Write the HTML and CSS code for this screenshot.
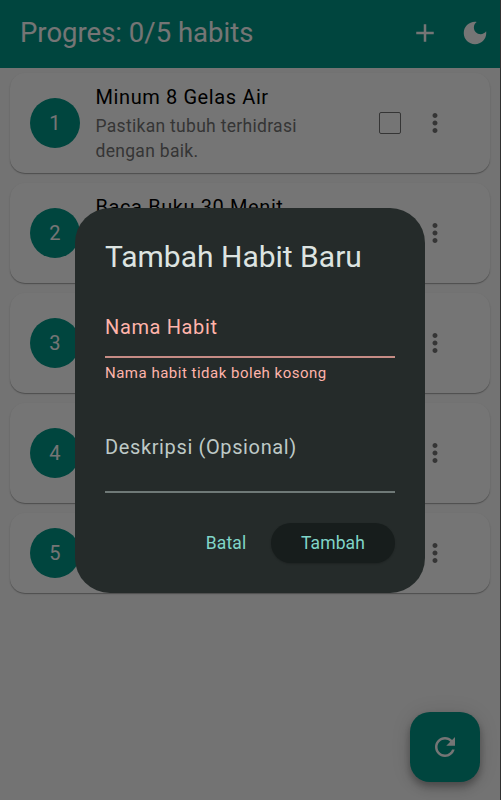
FILE: index.html
```html
<!DOCTYPE html>
<html lang="id">
<head>
<meta charset="utf-8">
<title>Habits</title>
<link rel="stylesheet" href="styles.css">
</head>
<body>
<svg class="defs" width="0" height="0">
  <symbol id="more" viewBox="0 0 24 24"><path d="M12 8c1.1 0 2-.9 2-2s-.9-2-2-2-2 .9-2 2 .9 2 2 2zm0 2c-1.1 0-2 .9-2 2s.9 2 2 2 2-.9 2-2-.9-2-2-2zm0 6c-1.1 0-2 .9-2 2s.9 2 2 2 2-.9 2-2-.9-2-2-2z"/></symbol>
</svg>
<div class="app">
  <header class="bar">
    <h1>Progres: 0/5 habits</h1>
    <svg class="icon" viewBox="0 0 24 24"><path d="M19 13h-6v6h-2v-6H5v-2h6V5h2v6h6v2z"/></svg>
    <svg class="icon" viewBox="0 0 24 24"><path d="M12 3c-4.97 0-9 4.03-9 9s4.03 9 9 9 9-4.03 9-9c0-.46-.04-.92-.1-1.36-.98 1.37-2.58 2.26-4.4 2.26-2.98 0-5.4-2.42-5.4-5.4 0-1.81.89-3.42 2.26-4.4-.44-.06-.9-.1-1.36-.1z"/></svg>
  </header>
  <main class="list">
    <article class="card">
      <span class="num">1</span>
      <div class="text"><h2>Minum 8 Gelas Air</h2><p>Pastikan tubuh terhidrasi dengan baik.</p></div>
      <span class="check"></span>
      <svg class="icon more"><use href="#more"/></svg>
    </article>
    <article class="card">
      <span class="num">2</span>
      <div class="text"><h2>Baca Buku 30 Menit</h2></div>
      <span class="check"></span>
      <svg class="icon more"><use href="#more"/></svg>
    </article>
    <article class="card">
      <span class="num">3</span>
      <div class="text"></div>
      <span class="check"></span>
      <svg class="icon more"><use href="#more"/></svg>
    </article>
    <article class="card">
      <span class="num">4</span>
      <div class="text"></div>
      <span class="check"></span>
      <svg class="icon more"><use href="#more"/></svg>
    </article>
    <article class="card short">
      <span class="num">5</span>
      <div class="text"></div>
      <span class="check"></span>
      <svg class="icon more"><use href="#more"/></svg>
    </article>
  </main>
  <div class="fab"><svg class="icon" viewBox="0 0 24 24"><path d="M17.65 6.35C16.2 4.9 14.21 4 12 4c-4.42 0-7.99 3.58-7.99 8s3.57 8 7.99 8c3.73 0 6.84-2.55 7.73-6h-2.08c-.82 2.33-3.04 4-5.65 4-3.31 0-6-2.69-6-6s2.69-6 6-6c1.66 0 3.14.69 4.22 1.78L13 11h7V4l-2.35 2.35z"/></svg></div>
</div>
<div class="scrim">
  <section class="dialog">
    <h2>Tambah Habit Baru</h2>
    <div class="field error"><label>Nama Habit</label></div>
    <p class="message">Nama habit tidak boleh kosong</p>
    <div class="field tall"><label>Deskripsi (Opsional)</label></div>
    <div class="actions">
      <button class="flat">Batal</button>
      <button class="raised">Tambah</button>
    </div>
  </section>
</div>
</body>
</html>
```
FILE: styles.css
```css
* { box-sizing: border-box; margin: 0; padding: 0; }
body {
  width: 501px;
  height: 800px;
  overflow: hidden;
  background: #303030;
  font-family: Roboto, sans-serif;
}
.defs { position: absolute; }
h1, h2 { font-weight: 400; }
.app {
  width: 500px;
  height: 800px;
  background: #fafafa;
}
.icon { width: 30px; height: 30px; fill: currentColor; flex: none; }
.bar {
  height: 68px;
  padding: 0 10px 3px 20px;
  display: flex;
  align-items: center;
  gap: 20px;
  background: #009688;
  color: #fff;
}
.bar h1 { flex: 1; font-size: 27.5px; line-height: 35px; }
.list {
  display: flex;
  flex-direction: column;
  gap: 10px;
  padding: 5px 10px;
}
.card {
  height: 100px;
  padding: 0 40px 0 20px;
  display: flex;
  align-items: center;
  background: #fff;
  border-radius: 15px;
  box-shadow: 0 1px 1px rgba(0, 0, 0, .26), 0 1px 2px rgba(0, 0, 0, .1);
}
.card.short { height: 80px; }
.num {
  flex: none;
  width: 50px;
  height: 50px;
  border-radius: 50%;
  background: #009688;
  color: #fff;
  font-size: 20px;
  line-height: 50px;
  letter-spacing: .2px;
  text-align: center;
}
.text { flex: 1; margin-left: 15.5px; align-self: flex-start; padding-top: 10px; }
.text h2 { font-size: 20px; line-height: 29px; letter-spacing: .6px; color: #000; }
.text p {
  width: 230px;
  padding-top: 2px;
  font-size: 17.5px;
  line-height: 25px;
  letter-spacing: .3px;
  color: #757575;
}
.check {
  width: 22px;
  height: 22px;
  margin-right: 19px;
  border: 1.25px solid #757575;
  border-radius: 2px;
}
.more { color: #757575; }
.fab {
  position: absolute;
  left: 410px;
  top: 712px;
  width: 70px;
  height: 70px;
  display: grid;
  place-items: center;
  border-radius: 20px;
  background: #009688;
  color: #fff;
  box-shadow: 0 4px 6px rgba(0, 0, 0, .2), 0 7px 12px rgba(0, 0, 0, .14), 0 1px 20px rgba(0, 0, 0, .12);
}
.scrim {
  position: absolute;
  left: 0;
  top: 0;
  width: 500px;
  height: 800px;
  background: rgba(0, 0, 0, .54);
  display: grid;
  place-items: center;
}
.dialog {
  width: 350px;
  height: 385px;
  padding: 30px;
  border-radius: 35px;
  background: #252b2a;
  color: #dde4e1;
}
.dialog h2 { font-size: 30px; line-height: 38px; padding-bottom: 2px; }
.field {
  height: 60px;
  margin-top: 20px;
  border-bottom: 2px solid #6f7977;
  color: #bec9c6;
  font-size: 20px;
  line-height: 30px;
  letter-spacing: .625px;
  padding-top: 14px;
}
.field.error { color: #ffb4ab; border-color: #c68c85; }
.message { color: #ffb4ab; font-size: 15px; line-height: 20px; letter-spacing: .5px; padding-top: 5px; }
.field.tall { height: 75px; margin-top: 35px; }
.actions { display: flex; justify-content: flex-end; gap: 10px; margin-top: 30px; }
button {
  height: 40px;
  border: 0;
  border-radius: 20px;
  background: none;
  color: #80d5c8;
  font: 400 17.5px/25px Roboto, sans-serif;
  letter-spacing: .125px;
  padding-top: 1px;
}
.flat { width: 70px; }
.raised { width: 124px; background: #171d1c; box-shadow: 0 1px 2px rgba(0, 0, 0, .2); }
```
